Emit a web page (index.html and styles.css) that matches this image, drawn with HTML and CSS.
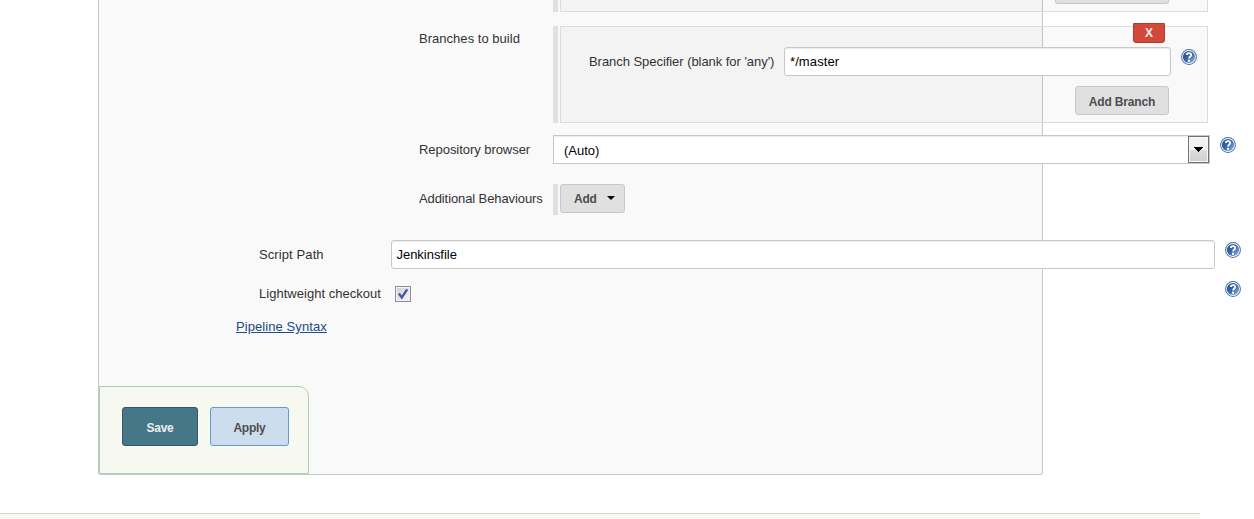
FILE: index.html
```html
<!DOCTYPE html>
<html lang="en">
<head>
<meta charset="utf-8">
<title>Pipeline configuration</title>
<link rel="stylesheet" href="styles.css">
</head>
<body>
<svg class="defs" width="0" height="0">
  <defs>
    <linearGradient id="blue" x1="0" y1="0" x2="1" y2="1">
      <stop offset="0" stop-color="#204a87"/><stop offset=".5" stop-color="#3968a8"/><stop offset="1" stop-color="#9dbde2"/>
    </linearGradient>
    <symbol id="help" viewBox="0 0 16 16">
      <circle cx="8" cy="8" r="7.9" fill="#3f6ba8"/>
      <circle cx="8" cy="8" r="6.9" fill="#fff"/>
      <circle cx="8" cy="8" r="6.1" fill="url(#blue)"/>
      <path d="M5.8 6C5.8 3.5 10.2 3.4 10.2 5.9C10.2 7.5 8.1 7.6 8.1 9.6" fill="none" stroke="#fff" stroke-width="1.8"/>
      <path d="M7 10.7h2v2H7z" fill="#fff"/>
    </symbol>
  </defs>
</svg>
<main class="panel">
  <section class="row previous">
    <div class="handle"></div>
    <div class="chunk"><div class="cut-button"></div></div>
  </section>
  <section class="row branches">
    <label class="label scm">Branches to build</label>
    <div class="handle"></div>
    <div class="chunk">
      <button class="delete">X</button>
      <div class="specifier">
        <label class="label wide">Branch Specifier (blank for 'any')</label>
        <div class="field">*/master</div>
        <svg class="help"><use href="#help"/></svg>
      </div>
      <button class="button add-branch">Add Branch</button>
    </div>
  </section>
  <section class="row browser">
    <label class="label scm">Repository browser</label>
    <div class="select"><span>(Auto)</span><i class="drop"><svg width="9" height="5" viewBox="0 0 9 5" shape-rendering="crispEdges"><path d="M0 0h9L4.5 5z"/></svg></i></div>
    <svg class="help"><use href="#help"/></svg>
  </section>
  <section class="row behaviours">
    <label class="label scm">Additional Behaviours</label>
    <div class="handle"></div>
    <button class="button add">Add<svg width="8" height="4" viewBox="0 0 8 4"><path d="M0 0h8L4 4z"/></svg></button>
  </section>
  <section class="row script">
    <label class="label path">Script Path</label>
    <div class="field">Jenkinsfile</div>
    <svg class="help"><use href="#help"/></svg>
  </section>
  <section class="row checkout">
    <label class="label light">Lightweight checkout</label>
    <div class="check"><svg width="12" height="12" viewBox="0 0 12 12"><path d="M1.9 5.5L4.8 9.4L10.2 1.3" fill="none" stroke="#43599b" stroke-width="2.3"/></svg></div>
    <svg class="help"><use href="#help"/></svg>
  </section>
  <a class="syntax">Pipeline Syntax</a>
  <div class="actions">
    <button class="save">Save</button>
    <button class="apply">Apply</button>
  </div>
</main>
<footer class="footer"></footer>
</body>
</html>
```
FILE: styles.css
```css
* { box-sizing: border-box; }
body { margin: 0; height: 519px; overflow: hidden; background: #fff; color: #333; font: 13px/16px "Liberation Sans", Arial, sans-serif; }
.defs { position: absolute; }
button { margin: 0; padding: 0; font: bold 12px/16px "Liberation Sans", Arial, sans-serif; color: #4d4d4d; }
.panel { display: flex; flex-direction: column; align-items: flex-start; width: 945px; height: 475px; margin-left: 98px; border: 1px solid #c8c8c8; border-top: 0; border-radius: 0 0 3px 3px; background: #f9f9f9; }
.row { display: flex; flex: none; align-items: flex-start; }
.label { flex: none; white-space: nowrap; }
.scm { width: 134px; padding-top: 5px; }
.handle { flex: none; align-self: stretch; width: 5px; margin-right: 2px; background: #e0e0e0; }
.chunk { flex: none; width: 648px; border: 1px solid #dcdcdc; background: rgba(0, 0, 0, .025); }
.help { flex: none; width: 16px; height: 16px; }
.field { flex: none; height: 29px; padding: 6px 5px; border: 1px solid #c8c8c8; border-radius: 3px; background: #fff; color: #000; box-shadow: inset 0 1px 1px rgba(0, 0, 0, .08); }
.button { display: flex; align-items: center; justify-content: center; height: 29px; padding-top: 1px; border: 1px solid #c8c8c8; border-radius: 3px; background: #e0e0e0; }

.previous { height: 12px; margin-left: 454px; }
.previous .chunk { height: 12px; border-top: 0; }
.cut-button { width: 114px; height: 4px; margin-left: 494px; border: 1px solid #c8c8c8; border-top: 0; border-radius: 0 0 3px 3px; background: #e0e0e0; }

.branches { height: 97px; margin: 14px 0 0 320px; }
.branches .scm { padding-top: 5px; letter-spacing: .03px; }
.branches .chunk { display: flex; flex-direction: column; height: 97px; }
.delete { flex: none; align-self: flex-end; width: 32px; height: 20px; margin: -4px 42px 0 0; border: 1px solid #b83a2d; border-radius: 0 0 3px 3px; background: #d24939; color: #eee; }
.specifier { display: flex; margin: 4px 0 0 28px; }
.wide { width: 195px; padding-top: 7px; letter-spacing: -.05px; }
.specifier .field { width: 387px; letter-spacing: .1px; }
.specifier .help { margin: 2px 0 0 10px; }
.add-branch { flex: none; align-self: flex-end; width: 94px; margin: 10px 38px 0 0; padding-top: 3px; letter-spacing: -.15px; }

.browser { height: 29px; margin: 12px 0 0 320px; }
.browser .scm { padding-top: 7px; letter-spacing: -.05px; }
.select { display: flex; flex: none; justify-content: space-between; width: 657px; height: 29px; border: 1px solid #c8c8c8; background: #fff; color: #000; box-shadow: inset 0 1px 1px rgba(0, 0, 0, .08); }
.select span { padding: 7px 0 0 10px; }
.drop { display: flex; align-items: center; justify-content: center; width: 21px; height: 27px; border: 1px solid #707070; background: linear-gradient(#f2f2f2 0 50%, #dedede 50%, #cfcfcf); box-shadow: inset 0 0 0 1px #f8f8f8; }
.browser .help { margin: 2px 0 0 10px; }

.behaviours { height: 31px; margin: 20px 0 0 320px; }
.behaviours .scm { padding-top: 7px; letter-spacing: -.1px; }
.add { justify-content: flex-start; width: 65px; padding-left: 13px; gap: 10.5px; letter-spacing: -.2px; }
.add svg { margin-top: -2px; }

.script { height: 29px; margin: 25px 0 0 160px; }
.path { width: 132px; padding-top: 7px; letter-spacing: .1px; }
.script .field { width: 824px; padding-left: 4.5px; letter-spacing: -.03px; }
.script .help { margin: 2px 0 0 10px; }

.checkout { height: 21px; margin: 12px 0 0 160px; }
.light { width: 136px; padding-top: 5px; letter-spacing: .03px; }
.check { width: 16px; height: 16px; margin-top: 5px; padding: 1px; border: 1px solid #8e8f8f; background: linear-gradient(135deg, #cbcfd5, #f6f6f6); box-shadow: inset 0 0 0 1px #f4f4f4; }
.check svg { display: block; }
.checkout .help { margin-left: 814px; }

.syntax { flex: none; margin: 17px 0 0 137px; color: #204a87; letter-spacing: .08px; text-decoration: underline; text-underline-offset: 1px; }
.actions { display: flex; flex: none; gap: 12px; width: 210px; height: 88px; margin-top: auto; padding: 20px 0 0 22px; border: 1px solid #abceb7; border-radius: 0 10px 0 0; background: #f7f8ef; }
.save, .apply { flex: none; height: 39px; padding-top: 2px; border-radius: 3px; letter-spacing: -.25px; }
.save { width: 76px; border: 1px solid #33566b; background: #467788; color: #eee; }
.apply { width: 79px; border: 1px solid #6399d1; background: #ccdded; }
.footer { width: 1200px; height: 6px; margin-top: 38px; border-top: 1px solid #d3d7cf; background: #f6f8f0; }
```
